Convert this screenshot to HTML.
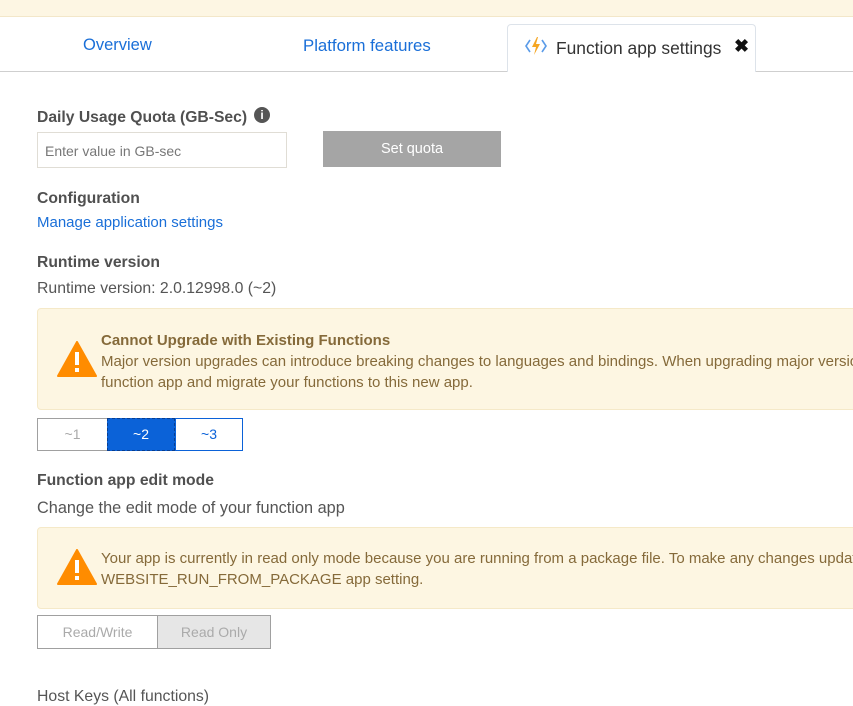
<!DOCTYPE html>
<html><head><meta charset="utf-8"><style>
*{margin:0;padding:0;box-sizing:border-box}
body{width:853px;height:704px;overflow:hidden;background:#fff;font-family:"Liberation Sans",sans-serif;color:#555;position:relative}
.a{position:absolute;white-space:nowrap}
.h{font-weight:bold;font-size:15.7px;color:#505050}
.t{font-size:15.8px;color:#555}
.warn{position:absolute;left:37px;width:830px;background:#fdf6e2;border:1px solid #f5e9c8;border-radius:4px}
.wt{position:absolute;left:63px;font-size:15px;color:#856a3a;line-height:21px;white-space:nowrap}
.tri{position:absolute;left:19px}
</style></head><body>
<div class="a" style="left:0;top:0;width:853px;height:17px;background:#fdf6e3;border-bottom:1px solid #f3e7c9"></div>
<div class="a" style="left:0;top:71px;width:853px;height:1px;background:#cfcfcf"></div>
<div class="a" style="left:83px;top:36px;font-size:16.5px;color:#1a6fd8">Overview</div>
<div class="a" style="left:303px;top:36px;font-size:16.8px;color:#1a6fd8">Platform features</div>
<div class="a" style="left:507px;top:24px;width:249px;height:48px;border:1px solid #dde3ea;border-bottom:none;border-radius:4px 4px 0 0;background:#fff"></div>
<svg class="a" style="left:525px;top:36px" width="22" height="20" viewBox="0 0 22 20"><path d="M5 4 L1 10 L5 16" stroke="#5a9be8" stroke-width="1.6" fill="none"/><path d="M17 4 L21 10 L17 16" stroke="#5a9be8" stroke-width="1.6" fill="none"/><path d="M12 1 L7 11 H11 L9 19 L15 8 H11 L13 1Z" fill="#f5a623"/></svg>
<div class="a" style="left:556px;top:38px;font-size:17.4px;color:#333">Function app settings</div>
<div class="a" style="left:734px;top:36px;font-size:18px;font-weight:bold;color:#111">✖</div>
<div class="a h" style="left:37px;top:109px">Daily Usage Quota (GB-Sec)</div>
<div class="a" style="left:254px;top:107px;width:16px;height:16px;border-radius:50%;background:#555;color:#fff;font-size:12px;font-weight:bold;text-align:center;line-height:16px">i</div>
<div class="a" style="left:37px;top:132px;width:250px;height:36px;border:1px solid #e0ddd5;font-size:14px;color:#777;padding:10px 7px">Enter value in GB-sec</div>
<div class="a" style="left:323px;top:131px;width:178px;height:36px;background:#a5a5a5;color:#fff;font-size:14.5px;text-align:center;line-height:36px">Set quota</div>
<div class="a h" style="left:37px;top:190px">Configuration</div>
<div class="a" style="left:37px;top:214px;font-size:15px;color:#1a6fd8">Manage application settings</div>
<div class="a h" style="left:37px;top:254px">Runtime version</div>
<div class="a t" style="left:37px;top:280px">Runtime version: 2.0.12998.0 (~2)</div>
<div class="warn" style="top:308px;height:102px">
<svg class="tri" style="top:32px" width="40" height="36" viewBox="0 0 40 36"><path d="M20 1 L39 35 H1Z" fill="#ff8c00" stroke="#ff8c00" stroke-width="2" stroke-linejoin="round"/><rect x="18" y="11" width="4" height="13" fill="#fff"/><rect x="18" y="27" width="4" height="4" fill="#fff"/></svg>
<div class="wt" style="top:21px"><b>Cannot Upgrade with Existing Functions</b><br>Major version upgrades can introduce breaking changes to languages and bindings. When upgrading major version<br>function app and migrate your functions to this new app.</div>
</div>
<div class="a" style="left:37px;top:418px;width:70px;height:33px;border:1px solid #a0a0a0;border-right:none;color:#aaa;font-size:14px;text-align:center;line-height:31px">~1</div>
<div class="a" style="left:107px;top:418px;width:68px;height:33px;background:#0b62d8;border:1px dashed #0a3f90;color:#fff;font-size:14px;text-align:center;line-height:31px">~2</div>
<div class="a" style="left:175px;top:418px;width:68px;height:33px;border:1px solid #0b62d8;color:#0b62d8;font-size:14px;text-align:center;line-height:31px">~3</div>
<div class="a h" style="left:37px;top:472px">Function app edit mode</div>
<div class="a t" style="left:37px;top:499px;font-size:16.3px">Change the edit mode of your function app</div>
<div class="warn" style="top:527px;height:82px">
<svg class="tri" style="top:21px" width="40" height="36" viewBox="0 0 40 36"><path d="M20 1 L39 35 H1Z" fill="#ff8c00" stroke="#ff8c00" stroke-width="2" stroke-linejoin="round"/><rect x="18" y="11" width="4" height="13" fill="#fff"/><rect x="18" y="27" width="4" height="4" fill="#fff"/></svg>
<div class="wt" style="top:20px">Your app is currently in read only mode because you are running from a package file. To make any changes update<br>WEBSITE_RUN_FROM_PACKAGE app setting.</div>
</div>
<div class="a" style="left:37px;top:615px;width:121px;height:34px;border:1px solid #a0a0a0;color:#aaa;font-size:14px;text-align:center;line-height:32px">Read/Write</div>
<div class="a" style="left:157px;top:615px;width:114px;height:34px;border:1px solid #a0a0a0;background:#e6e6e6;color:#aaa;font-size:14px;text-align:center;line-height:32px">Read Only</div>
<div class="a t" style="left:37px;top:688px">Host Keys (All functions)</div>
</body></html>
